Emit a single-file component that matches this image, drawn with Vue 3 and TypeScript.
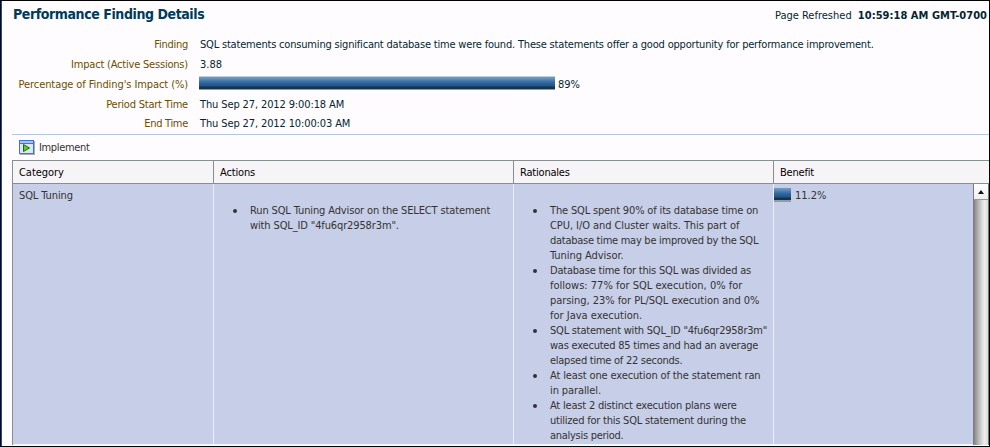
<script setup lang="ts">
type Line = [text: string, tracking: number]

const facts: { label: Line; text?: Line; percent?: number }[] = [
  { label: ['Finding', -0.25], text: ['SQL statements consuming significant database time were found. These statements offer a good opportunity for performance improvement.', -0.19] },
  { label: ['Impact (Active Sessions)', -0.2], text: ['3.88', 0] },
  { label: ["Percentage of Finding's Impact (%)", -0.09], percent: 89 },
  { label: ['Period Start Time', -0.22], text: ['Thu Sep 27, 2012 9:00:18 AM', -0.12] },
  { label: ['End Time', -0.3], text: ['Thu Sep 27, 2012 10:00:03 AM', -0.12] },
]
const headings: Line[] = [['Category', -0.05], ['Actions', -0.15], ['Rationales', -0.2], ['Benefit', -0.2]]
const actions: Line[][] = [[['Run SQL Tuning Advisor on the SELECT statement', -0.13], ['with SQL_ID "4fu6qr2958r3m".', -0.13]]]
const rationales: Line[][] = [
  [
    ['The SQL spent 90% of its database time on', -0.16],
    ['CPU, I/O and Cluster waits. This part of', -0.07],
    ['database time may be improved by the SQL', -0.27],
    ['Tuning Advisor.', -0.05],
  ],
  [
    ['Database time for this SQL was divided as', -0.21],
    ['follows: 77% for SQL execution, 0% for', 0],
    ['parsing, 23% for PL/SQL execution and 0%', -0.05],
    ['for Java execution.', 0],
  ],
  [
    ['SQL statement with SQL_ID "4fu6qr2958r3m"', -0.22],
    ['was executed 85 times and had an average', -0.22],
    ['elapsed time of 22 seconds.', -0.26],
  ],
  [['At least one execution of the statement ran', -0.13], ['in parallel.', -0.1]],
  [
    ['At least 2 distinct execution plans were', -0.2],
    ['utilized for this SQL statement during the', -0.22],
    ['analysis period.', -0.28],
  ],
]
const track = (l: Line) => ({ letterSpacing: l[1] + 'px' })
</script>

<template>
  <main class="page">
    <header class="top">
      <h1>Performance Finding Details</h1>
      <p class="refreshed">Page Refreshed <b>10:59:18 AM GMT-0700</b></p>
    </header>
    <dl class="facts">
      <div v-for="f in facts" :key="f.label[0]" class="fact">
        <dt><span :style="track(f.label)">{{ f.label[0] }}</span></dt>
        <dd v-if="f.percent" class="meter">
          <span class="bar" :style="{ width: f.percent * 4 + 'px' }"></span><span>{{ f.percent }}%</span>
        </dd>
        <dd v-else-if="f.text"><span :style="track(f.text)">{{ f.text[0] }}</span></dd>
      </div>
    </dl>
    <div class="toolbar">
      <svg width="16" height="15" viewBox="0 0 16 15" shape-rendering="crispEdges">
        <path d="M1 1H16V15H1Z" fill="#a9acb5" />
        <path d="M0 0H15V14H0Z" fill="#3f74d0" />
        <path d="M1 1H14V3H1Z" fill="#a5c2f6" />
        <path d="M1 4H14V13H1Z" fill="#dce6f8" />
        <path d="M4.5 4.5V11.5L10.5 8Z" fill="#58d028" stroke="#1a6a14" shape-rendering="auto" />
      </svg>
      <span class="implement">Implement</span>
    </div>
    <section class="table">
      <div class="row head"><div v-for="h in headings" :key="h[0]" :style="track(h)">{{ h[0] }}</div></div>
      <div class="body">
        <div class="row data">
          <div class="category">SQL Tuning</div>
          <div><ul><li v-for="(a, i) in actions" :key="i"><span v-for="l in a" :key="l[0]" :style="track(l)">{{ l[0] }}</span></li></ul></div>
          <div><ul><li v-for="(r, i) in rationales" :key="i"><span v-for="l in r" :key="l[0]" :style="track(l)">{{ l[0] }}</span></li></ul></div>
          <div class="benefit"><span class="bar small"></span><span class="value">11.2%</span></div>
        </div>
        <div class="scroll"><div class="up"><svg width="6" height="4" viewBox="0 0 6 4"><path d="M0 4L3 0L6 4Z" fill="#111" /></svg></div></div>
      </div>
    </section>
  </main>
</template>

<style>
body { margin: 0; background: #000; overflow: hidden; }
</style>
<style scoped>
* { box-sizing: border-box; }
.page { width: 990px; height: 447px; padding-left: 11px; border: 1px solid #000; box-shadow: inset 1px 0 #005a9c; background: #fffcff; color: #04262e; font: 11px/15px "DejaVu Sans Condensed", "DejaVu Sans", sans-serif; white-space: nowrap; overflow: hidden; }
.top { display: flex; justify-content: space-between; height: 34px; padding: 4px 2px 0 1px; }
h1 { margin: 0; font-size: 14px; line-height: 18px; color: #003a5a; letter-spacing: -0.42px; }
.refreshed { margin: 3px 0 0; }
.refreshed b { margin-left: 3px; letter-spacing: 0.04px; }
.facts { margin: 0; height: 99px; }
.fact { display: flex; height: 19.75px; align-items: center; }
dt { width: 176px; text-align: right; color: #6b4e00; }
dd { margin: 0 0 0 12px; }
.meter { display: flex; margin-left: 11px; }
.bar { height: 14px; margin-right: 3px; background: linear-gradient(#bccfdd 0 1px, #7097ba 1px 2px, #4f82b2 4px, #2e649b 7px, #225586 10px, #17334c 11px 13px, #8e9bab 13px); }
.meter .bar { margin-top: -1px; }
.toolbar { display: flex; align-items: center; gap: 4px; height: 26px; padding-left: 7px; border-top: 1px solid #b4c5df; color: #333; }
.implement { letter-spacing: -0.35px; }
.table { height: 285px; border: solid #869090; border-width: 1px 0 0 1px; }
.row { display: grid; grid-template-columns: 201px 300px 260px 1fr; }
.head { height: 23px; background: #f7f4f7; border-bottom: 1px solid #869090; color: #000; }
.head > div { padding: 4px 6px; border-right: 1px solid #869090; }
.head > div:last-child { border-right: 0; }
.body { display: flex; height: 261px; }
.data { flex: 1; background: #c7cee8; color: #333; border-bottom: 1px solid #f4f4fc; }
.data > div { min-width: 0; border-right: 1px solid #eeeefa; }
.data > div:last-child { border-right: 0; }
.data .category { padding: 4px 6px; letter-spacing: -0.1px; }
ul { list-style: none; margin: 0; padding: 19px 0 0 36px; }
li { position: relative; }
li::before { content: ""; position: absolute; left: -17px; top: 6px; width: 4px; height: 4px; border-radius: 2px; background: #333; }
li span { display: block; }
.data .benefit { display: flex; align-items: flex-start; padding-top: 3px; }
.small { width: 17px; height: 15px; margin-right: 4px; }
.value { margin-top: 1px; }
.scroll { width: 16px; border-right: 1px solid #777; background: linear-gradient(90deg, #777, #b5b5b5 35%, #eee 75%, #ddd); }
.up { display: grid; place-items: center; height: 16px; margin-left: 1px; border-bottom: 1px solid #999; background: linear-gradient(#fff, #eee); }
</style>
